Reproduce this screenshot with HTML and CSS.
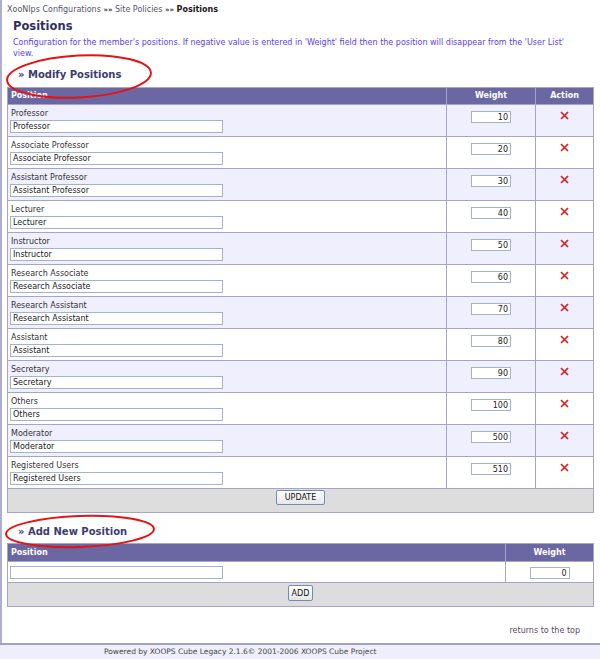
FILE: index.html
```html
<!DOCTYPE html>
<html>
<head>
<meta charset="utf-8">
<title>Positions</title>
<link rel="stylesheet" href="styles.css">
</head>
<body>
<div class="page">
  <div class="main">
    <div class="crumbs"><span>XooNIps Configurations</span> <b class="sep">»»</b> <span>Site Policies</span> <b class="sep">»»</b> <b class="cur">Positions</b></div>
    <h1 class="title">Positions</h1>
    <p class="desc">Configuration for the member's positions. If negative value is entered in 'Weight' field then the position will disappear from the 'User List' view.</p>

    <div class="section-head">
      <span>» Modify Positions</span>
      <svg class="oval oval-1" width="150" height="47" viewBox="0 0 150 47"><ellipse cx="75" cy="23.5" rx="72" ry="21" transform="rotate(-3 75 23.5)" fill="none" stroke="#e41414" stroke-width="2"/></svg>
    </div>

    <table class="outer list">
      <thead>
        <tr><th class="c-pos">Position</th><th class="c-w">Weight</th><th class="c-a">Action</th></tr>
      </thead>
      <tbody>
        <tr class="odd"><td class="pos"><div class="lbl">Professor</div><input class="name" value="Professor"></td><td class="w"><input class="wt" value="10"></td><td class="a"><svg class="del" width="9" height="9" viewBox="0 0 9 9"><path d="M1 1L8 8M8 1L1 8"/></svg></td></tr>
        <tr class="even"><td class="pos"><div class="lbl">Associate Professor</div><input class="name" value="Associate Professor"></td><td class="w"><input class="wt" value="20"></td><td class="a"><svg class="del" width="9" height="9" viewBox="0 0 9 9"><path d="M1 1L8 8M8 1L1 8"/></svg></td></tr>
        <tr class="odd"><td class="pos"><div class="lbl">Assistant Professor</div><input class="name" value="Assistant Professor"></td><td class="w"><input class="wt" value="30"></td><td class="a"><svg class="del" width="9" height="9" viewBox="0 0 9 9"><path d="M1 1L8 8M8 1L1 8"/></svg></td></tr>
        <tr class="even"><td class="pos"><div class="lbl">Lecturer</div><input class="name" value="Lecturer"></td><td class="w"><input class="wt" value="40"></td><td class="a"><svg class="del" width="9" height="9" viewBox="0 0 9 9"><path d="M1 1L8 8M8 1L1 8"/></svg></td></tr>
        <tr class="odd"><td class="pos"><div class="lbl">Instructor</div><input class="name" value="Instructor"></td><td class="w"><input class="wt" value="50"></td><td class="a"><svg class="del" width="9" height="9" viewBox="0 0 9 9"><path d="M1 1L8 8M8 1L1 8"/></svg></td></tr>
        <tr class="even"><td class="pos"><div class="lbl">Research Associate</div><input class="name" value="Research Associate"></td><td class="w"><input class="wt" value="60"></td><td class="a"><svg class="del" width="9" height="9" viewBox="0 0 9 9"><path d="M1 1L8 8M8 1L1 8"/></svg></td></tr>
        <tr class="odd"><td class="pos"><div class="lbl">Research Assistant</div><input class="name" value="Research Assistant"></td><td class="w"><input class="wt" value="70"></td><td class="a"><svg class="del" width="9" height="9" viewBox="0 0 9 9"><path d="M1 1L8 8M8 1L1 8"/></svg></td></tr>
        <tr class="even"><td class="pos"><div class="lbl">Assistant</div><input class="name" value="Assistant"></td><td class="w"><input class="wt" value="80"></td><td class="a"><svg class="del" width="9" height="9" viewBox="0 0 9 9"><path d="M1 1L8 8M8 1L1 8"/></svg></td></tr>
        <tr class="odd"><td class="pos"><div class="lbl">Secretary</div><input class="name" value="Secretary"></td><td class="w"><input class="wt" value="90"></td><td class="a"><svg class="del" width="9" height="9" viewBox="0 0 9 9"><path d="M1 1L8 8M8 1L1 8"/></svg></td></tr>
        <tr class="even"><td class="pos"><div class="lbl">Others</div><input class="name" value="Others"></td><td class="w"><input class="wt" value="100"></td><td class="a"><svg class="del" width="9" height="9" viewBox="0 0 9 9"><path d="M1 1L8 8M8 1L1 8"/></svg></td></tr>
        <tr class="odd"><td class="pos"><div class="lbl">Moderator</div><input class="name" value="Moderator"></td><td class="w"><input class="wt" value="500"></td><td class="a"><svg class="del" width="9" height="9" viewBox="0 0 9 9"><path d="M1 1L8 8M8 1L1 8"/></svg></td></tr>
        <tr class="even"><td class="pos"><div class="lbl">Registered Users</div><input class="name" value="Registered Users"></td><td class="w"><input class="wt" value="510"></td><td class="a"><svg class="del" width="9" height="9" viewBox="0 0 9 9"><path d="M1 1L8 8M8 1L1 8"/></svg></td></tr>
        <tr class="foot"><td colspan="3"><button class="btn btn-update" type="button">UPDATE</button></td></tr>
      </tbody>
    </table>

    <div class="section-head add-head">
      <span>» Add New Position</span>
      <svg class="oval oval-2" width="152" height="35" viewBox="0 0 152 35"><ellipse cx="76" cy="17.5" rx="74" ry="15.5" transform="rotate(-2 76 17.5)" fill="none" stroke="#e41414" stroke-width="2"/></svg>
    </div>

    <table class="outer add">
      <thead>
        <tr><th class="c-pos2">Position</th><th class="c-w2">Weight</th></tr>
      </thead>
      <tbody>
        <tr class="plain"><td class="pos2"><input class="name" value=""></td><td class="w2"><input class="wt" value="0"></td></tr>
        <tr class="foot2"><td colspan="2"><button class="btn btn-add" type="button">ADD</button></td></tr>
      </tbody>
    </table>

    <div class="totop">returns to the top</div>
  </div>
  <div class="footer">Powered by XOOPS Cube Legacy 2.1.6© 2001-2006 XOOPS Cube Project</div>
</div>
</body>
</html>
```

FILE: styles.css
```css
html, body {
  margin: 0;
  padding: 0;
  background: #ffffff;
}

body {
  font-family: "DejaVu Sans", Verdana, sans-serif;
  font-size: 8px;
  color: #333;
}

.page {
  width: 600px;
}

.main {
  border-left: 2px solid #aeaed4;
  padding: 4px 6px 6px 5px;
}

.crumbs {
  line-height: 12px;
  color: #555566;
}

.crumbs .sep {
  color: #333;
  font-size: 7px;
}

.crumbs .cur {
  color: #1a1a1a;
}

.title {
  margin: 3px 0 0 6px;
  font-size: 11.5px;
  line-height: 14px;
  font-weight: bold;
  color: #2f2f60;
}

.desc {
  margin: 4px 14px 0 6px;
  line-height: 11px;
  color: #6040e8;
}

.section-head {
  position: relative;
  margin: 9px 0 5px 0;
  padding-left: 11px;
  font-size: 10px;
  line-height: 14px;
  font-weight: bold;
  color: #3c3c70;
}

.add-head {
  margin: 12px 0 4px 0;
}

.oval {
  position: absolute;
  pointer-events: none;
}

.oval-1 {
  left: -3px;
  top: -15px;
}

.oval-2 {
  left: -3px;
  top: -11px;
}

.outer {
  width: 587px;
  border-collapse: collapse;
  border: 1px solid #a6a4c8;
  table-layout: fixed;
}

.outer th {
  background: #6a67a3;
  color: #ffffff;
  font-weight: bold;
  line-height: 12px;
  padding: 2px 3px;
  border: 1px solid #a6a4c8;
  text-align: center;
}

.outer th.c-pos, .outer th.c-pos2 {
  text-align: left;
}

.c-pos { width: auto; }
.c-w { width: 82px; }
.c-a { width: 51px; }
.c-w2 { width: 81px; }

.add th {
  padding: 3px 3px 2px;
}

.outer td {
  border: 1px solid #a6a4c8;
  vertical-align: top;
  padding: 0;
}

.odd td { background: #efeffd; }
.even td { background: #ffffff; }
.plain td { background: #ffffff; }

td.pos {
  padding: 3px 3px 3px 2px;
}

.lbl {
  line-height: 12px;
  color: #333;
  padding-left: 1px;
}

input {
  font-family: "DejaVu Sans", Verdana, sans-serif;
  font-size: 8px;
  color: #222;
  box-sizing: border-box;
  border: 1px solid #a3b3ca;
  background: #fff;
  margin: 0;
  outline: none;
}

input.name {
  display: block;
  width: 213px;
  height: 13px;
  padding: 0 2px;
}

input.wt {
  width: 40px;
  height: 12px;
  padding: 0 2px;
  text-align: right;
}

td.w, td.w2 {
  text-align: center;
  padding-top: 6px;
}

td.a {
  text-align: center;
  padding-top: 6px;
}

.del {
  display: inline-block;
  stroke: #d81e1e;
  stroke-width: 1.6;
  fill: none;
}

.foot td, .foot2 td {
  background: #dddddd;
  text-align: center;
}

.foot td {
  padding: 1px 0 7px;
}

.foot2 td {
  padding: 2px 0 5px;
}

td.pos2 {
  padding: 4px 3px 3px 2px;
}

td.w2 {
  padding-top: 5px;
}

.btn {
  font-family: "DejaVu Sans", Verdana, sans-serif;
  font-size: 8px;
  color: #111;
  border: 1px solid #6e8db4;
  border-radius: 2px;
  background: linear-gradient(#ffffff, #e6e6e6);
  padding: 0 4px;
  margin: 0;
  height: 15px;
  line-height: 13px;
}

.btn-update {
  width: 49px;
}

.btn-add {
  width: 25px;
  height: 16px;
  padding: 0;
}

.totop {
  margin-top: 18px;
  text-align: right;
  line-height: 12px;
  color: #5a4a6a;
  padding-right: 14px;
}

.footer {
  border-top: 2px solid #a2a2ba;
  background: #efeffb;
  line-height: 14px;
  padding-left: 104px;
  color: #444;
  font-size: 7.5px;
}
```
